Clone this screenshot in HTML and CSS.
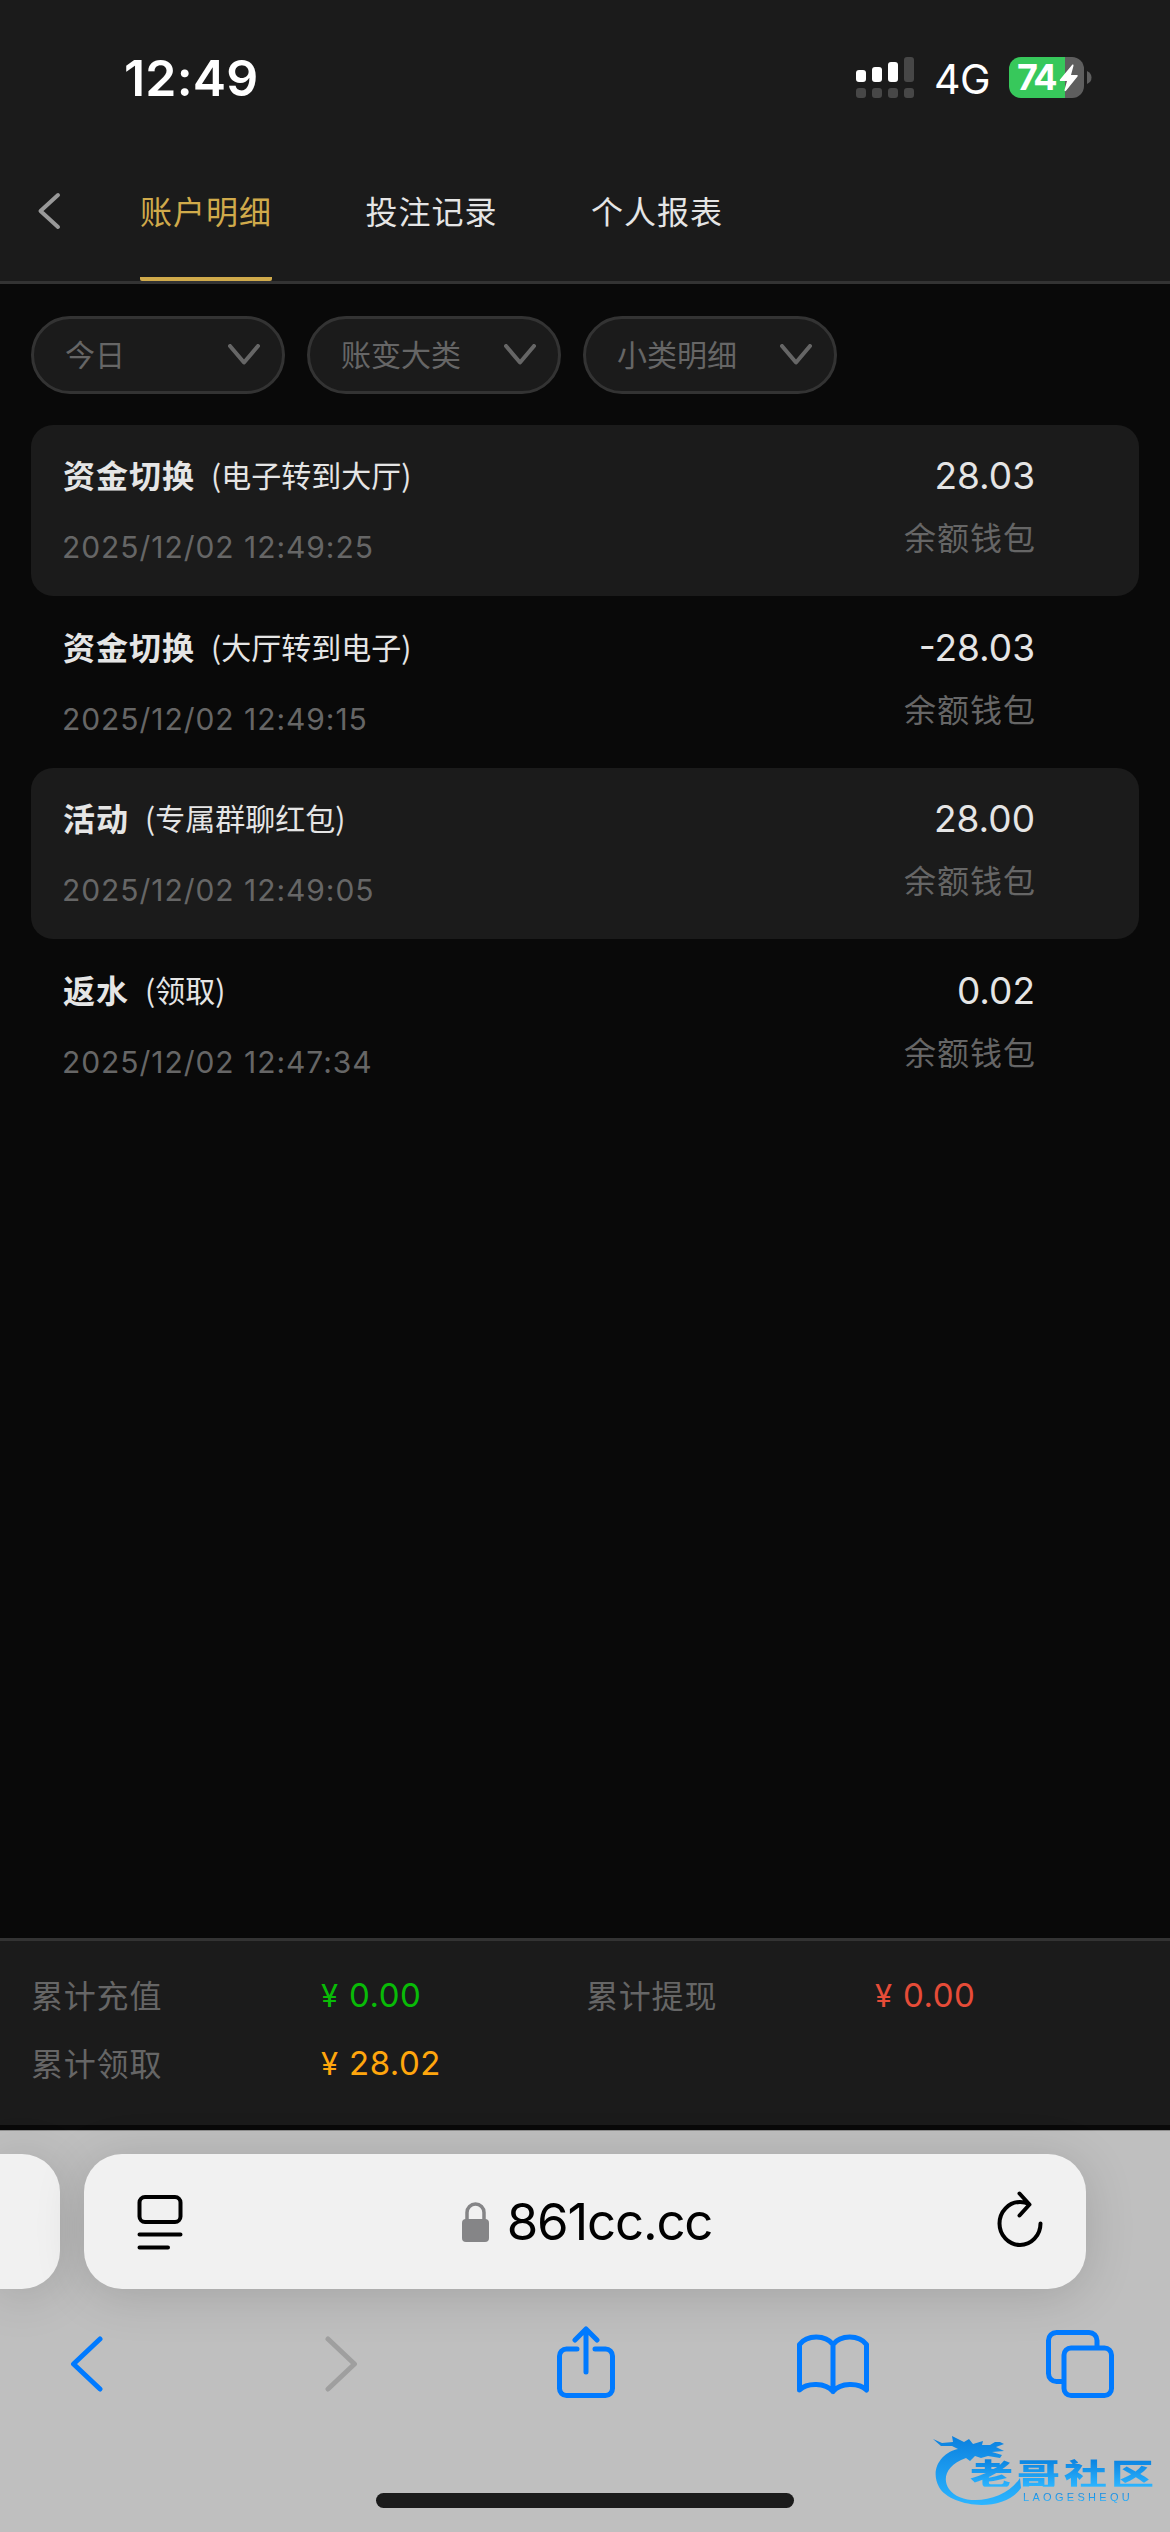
FILE: index.html
```html
<!DOCTYPE html>
<html lang="zh-CN">
<head>
<meta charset="utf-8">
<title>账户明细</title>
<link rel="stylesheet" href="styles.css">
</head>
<body>
<div class="screen">
  <header class="header">
    <div class="status">
      <span class="time">12:49</span>
      <div class="status-right">
        <svg class="signal" width="58" height="41" viewBox="0 0 58 41" fill="#fff">
          <rect x="0" y="13" width="10" height="12" rx="3"/><rect x="16" y="10" width="10" height="15" rx="3"/><rect x="32" y="5" width="10" height="20" rx="3"/>
          <g fill="#474747"><rect x="48" y="0" width="10" height="25" rx="3"/><rect x="0" y="31" width="10" height="10" rx="3"/><rect x="16" y="31" width="10" height="10" rx="3"/><rect x="32" y="31" width="10" height="10" rx="3"/><rect x="48" y="31" width="10" height="10" rx="3"/></g>
        </svg>
        <span class="network">4G</span>
        <div class="battery">
          <div class="cell"><span class="level">74</span>
            <svg class="bolt" width="20" height="28" viewBox="0 0 20 28"><path d="M13 1 1 15.5c-.5.8-.2 1.5.7 1.5H8L5.5 26c-.2 1.2.8 1.500 1.500.7L18.500 12.500c.5-.8.2-1.500-.7-1.500H12L14.500 1.800C14.700.6 13.700.2 13 1Z" fill="#fff"/></svg>
          </div>
          <svg class="nub" width="5" height="13" viewBox="0 0 5 13"><path d="M0 0q4.500 2 4.500 6.500T0 13Z" fill="#5e5e5e"/></svg>
        </div>
      </div>
    </div>
    <nav class="tabs">
      <svg class="back" width="26" height="40" viewBox="0 0 26 40" fill="none" stroke="#999" stroke-width="4" stroke-linecap="round" stroke-linejoin="round"><path d="M22 4 4.500 20 22 36"/></svg>
      <span class="tab active">账户明细</span>
      <span class="tab">投注记录</span>
      <span class="tab">个人报表</span>
    </nav>
  </header>

  <main class="content">
    <div class="filters">
      <div class="filter"><span>今日</span><svg width="32" height="22" viewBox="0 0 32 22"><path d="M2 2 16 18.500 30 2"/></svg></div>
      <div class="filter"><span>账变大类</span><svg width="32" height="22" viewBox="0 0 32 22"><path d="M2 2 16 18.500 30 2"/></svg></div>
      <div class="filter"><span>小类明细</span><svg width="32" height="22" viewBox="0 0 32 22"><path d="M2 2 16 18.500 30 2"/></svg></div>
    </div>
    <div class="list">
      <div class="record">
        <div class="info"><p class="title"><b>资金切换</b><span>(电子转到大厅)</span></p><p class="date">2025/12/02 12:49:25</p></div>
        <div class="amount"><p class="value">28.03</p><p class="wallet">余额钱包</p></div>
      </div>
      <div class="record">
        <div class="info"><p class="title"><b>资金切换</b><span>(大厅转到电子)</span></p><p class="date">2025/12/02 12:49:15</p></div>
        <div class="amount"><p class="value">-28.03</p><p class="wallet">余额钱包</p></div>
      </div>
      <div class="record">
        <div class="info"><p class="title"><b>活动</b><span>(专属群聊红包)</span></p><p class="date">2025/12/02 12:49:05</p></div>
        <div class="amount"><p class="value">28.00</p><p class="wallet">余额钱包</p></div>
      </div>
      <div class="record">
        <div class="info"><p class="title"><b>返水</b><span>(领取)</span></p><p class="date">2025/12/02 12:47:34</p></div>
        <div class="amount"><p class="value">0.02</p><p class="wallet">余额钱包</p></div>
      </div>
    </div>
  </main>

  <section class="totals">
    <span>累计充值</span><span class="sum green"><i>¥</i>0.00</span>
    <span>累计提现</span><span class="sum red"><i>¥</i>0.00</span>
    <span>累计领取</span><span class="sum orange"><i>¥</i>28.02</span>
  </section>

  <footer class="browser">
    <div class="address-row">
      <div class="previous-tab"></div>
      <div class="address">
        <svg class="reader" width="46" height="56" viewBox="0 0 46 56" fill="none" stroke="#000" stroke-width="4" stroke-linecap="round"><rect x="2.500" y="3" width="41" height="25" rx="5.500"/><path d="M2.500 40.500h41M2.500 53.500h28.500"/></svg>
        <div class="site">
          <svg class="lock" width="27" height="40" viewBox="0 0 27 40"><path d="M5 18v-7.500a8.500 8.500 0 0 1 17 0V18" fill="none" stroke="#858587" stroke-width="3.500"/><rect x="0" y="17" width="27" height="23" rx="4" fill="#858587"/></svg>
          <span class="url">861cc.cc</span>
        </div>
        <svg class="reload" width="46" height="58" viewBox="0 0 46 58" fill="none" stroke="#000" stroke-width="4" stroke-linecap="round" stroke-linejoin="round"><path d="M43.500 32.500a20.500 21.500 0 1 1-20.500-21.500q5 0 9 2M22.500 2.500 32.500 13.500 22.500 24.500"/></svg>
      </div>
    </div>
    <div class="toolbar">
      <svg width="33" height="56" viewBox="0 0 33 56"><path d="M30 3 3.500 28 30 53"/></svg>
      <svg class="disabled" width="33" height="56" viewBox="0 0 33 56"><path d="M3 3 29.500 28 3 53"/></svg>
      <svg class="share" width="58" height="72" viewBox="0 0 58 72"><path d="M20 23H9.500a7 7 0 0 0-7 7v32.500a7 7 0 0 0 7 7h39a7 7 0 0 0 7-7V30a7 7 0 0 0-7-7H38M29 46V3M18 14 29 3l11 11"/></svg>
      <svg width="72" height="62" viewBox="0 0 72 62"><path d="M36 11.500v47M36 11.500C28.500 1.500 10 1.500 2.500 11.500V57C10 49.500 28.500 49.500 36 58.500 43.500 49.500 62 49.500 69.500 57V11.500C62 1.500 43.500 1.500 36 11.500Z"/></svg>
      <svg width="68" height="68" viewBox="0 0 68 68"><path d="M16 51.500H10.500a8 8 0 0 1-8-8v-33a8 8 0 0 1 8-8H43a8 8 0 0 1 8 8V16"/><rect x="18" y="18" width="47.500" height="47.500" rx="7"/></svg>
    </div>
    <div class="home-indicator"></div>
    <div class="watermark">
      <svg width="100" height="76" viewBox="0 0 100 76">
        <defs><linearGradient id="blue" x1="0" y1="0" x2="0" y2="1"><stop offset="0" stop-color="#0a80df"/><stop offset="1" stop-color="#2cb5ff"/></linearGradient></defs>
        <path fill="url(#blue)" d="M3 5 12 9 23 8 22 2 34 8 39 5 43 10 53 7 52 11 60 11 65 8 70 8 74 10 66 13 74 17 62 18 72 21 70 24 58 22 51 24 45 22 40 27 36 24C16 31 12 45 19 55 31 73 74 69 90 44L91 54C73 80 20 73 9 53-1 34 13 18 28 15L22 12 11 12Z"/>
      </svg>
      <span class="mark">老哥社区</span>
      <span class="latin">LAOGESHEQU</span>
    </div>
  </footer>
</div>
</body>
</html>
```

FILE: styles.css
```css
* { box-sizing: border-box; }
body { margin: 0; background: #090909; }
p { margin: 0; }
svg { display: block; flex: none; }

.screen {
  width: 1170px;
  height: 2532px;
  display: flex;
  flex-direction: column;
  overflow: hidden;
  background: #090909;
  color: #e5e5e5;
  font-family: Inter, "Noto Sans CJK SC", sans-serif;
  white-space: nowrap;
}

.header { height: 284px; background: #1b1b1b; border-bottom: 3px solid #333; }
.status { height: 141px; padding: 14px 78px 0 124px; display: flex; justify-content: space-between; align-items: center; color: #fff; }
.time { font-size: 50px; font-weight: 600; letter-spacing: 0.2px; }
.status-right { display: flex; align-items: center; }
.network { width: 57px; margin: 3px 0 0 20px; font-size: 41px; font-weight: 400; letter-spacing: -0.500px; }
.battery { display: flex; align-items: center; gap: 3px; margin-left: 18px; }
.cell {
  width: 75px; height: 41px; padding-left: 8px;
  display: flex; align-items: center;
  border-radius: 12px;
  background: linear-gradient(90deg, #37c85b 56px, #5e5e5e 56px);
}
.level { width: 42px; font-size: 36px; font-weight: 700; letter-spacing: -2.500px; line-height: 41px; }

.tabs { height: 140px; display: flex; align-items: stretch; padding-left: 36px; }
.back { align-self: center; margin-right: 78px; }
.tab {
  width: 132px; margin-right: 93.500px; padding-top: 1px;
  display: flex; align-items: center;
  font-size: 32px; letter-spacing: 1px;
  border-bottom: 4px solid transparent;
  border-radius: 2px;
}
.tab.active { color: #d0aa4b; background: linear-gradient(#d0aa4b, #d0aa4b) bottom / 100% 4px no-repeat border-box; }

.content { flex: 1; padding: 32px 31px 0; }
.filters { display: flex; gap: 22px; }
.filter {
  width: 254px; height: 78px; padding: 0 22px 0 31px;
  display: flex; justify-content: space-between; align-items: center;
  border: 3px solid #333; border-radius: 39px;
  background: #1b1b1b; color: #666; font-size: 30px;
}
.filter span { padding-bottom: 4px; }
.filter svg { fill: none; stroke: #666; stroke-width: 4; stroke-linecap: round; stroke-linejoin: round; }

.list { margin-top: 31px; }
.record { height: 171.500px; padding: 0 104px 0 32px; display: flex; justify-content: space-between; border-radius: 22px; }
.record:nth-child(odd) { height: 171px; margin-bottom: 0.500px; background: #1b1b1b; }
.info { padding-top: 24px; }
.title { height: 50px; display: flex; align-items: center; gap: 16px; font-size: 30px; font-family: "Noto Sans CJK SC", sans-serif; }
.title b { font-size: 32px; letter-spacing: 1px; }
.date { margin: 23px 0 0 -1px; height: 50px; line-height: 50px; font-size: 30px; letter-spacing: 0.950px; color: #666; }
.amount { padding-top: 26px; text-align: right; }
.value { height: 50px; line-height: 50px; font-size: 37px; }
.wallet { margin: 13px -1px 0 0; height: 50px; line-height: 50px; font-size: 32px; letter-spacing: 1px; color: #666; }

.totals {
  height: 187px; padding: 19px 31px 0;
  display: grid; grid-template-columns: 290px 265px 289px 1fr; grid-auto-rows: 68px; align-items: center; align-content: start;
  background: #1b1b1b; border-top: 3px solid #333;
  color: #666; font-size: 32px; letter-spacing: 0.800px;
}
.sum { font-size: 33px; letter-spacing: 0.500px; padding-top: 1px; }
.sum i { display: inline-block; width: 28px; font-size: 31px; font-style: normal; line-height: 1; }
.green { color: #09bb07; }
.red { color: #e64c38; }
.orange { color: #ffa60d; }

.browser { position: relative; height: 402px; margin-top: 5px; background: #bfbfbf; border-top: 1px solid #8f8f8f; color: #000; }
.address-row { display: flex; gap: 24px; padding-top: 23px; }
.previous-tab, .address { height: 135px; background: #f1f1f1; box-shadow: 0 6px 50px rgba(0, 0, 0, 0.15); }
.previous-tab { width: 60px; border-radius: 0 38px 38px 0; }
.address { width: 1002px; padding: 0 43px 0 53px; display: flex; align-items: center; justify-content: space-between; border-radius: 38px; }
.site { display: flex; align-items: center; gap: 18px; margin-right: 6px; }
.url { font-size: 51px; letter-spacing: -1.200px; }
.reload { margin-bottom: 3px; }
.toolbar {
  position: relative;
  height: 140px; margin-top: 5px; padding-left: 70px;
  display: grid; grid-template-columns: 255px 232px 240px 249px auto; align-items: center; justify-content: start;
}
.toolbar svg { fill: none; stroke: #007aff; stroke-width: 5; stroke-linecap: round; stroke-linejoin: round; }
.toolbar .disabled { stroke: #9f9f9f; }
.toolbar .share { margin-bottom: 4px; }
.home-indicator { width: 418px; height: 15px; margin: 59px auto 0; border-radius: 8px; background: #1b1b1b; }

.watermark { position: absolute; left: 930px; top: 303px; width: 230px; height: 80px; }
.mark, .latin {
  position: absolute;
  background: linear-gradient(#087fde, #2cb5ff);
  background-clip: text; -webkit-background-clip: text; color: transparent;
}
.mark { left: 40px; top: 17px; font: 900 43px/42px "Noto Sans CJK SC", sans-serif; letter-spacing: 4px; transform: scaleY(0.7); }
.latin { left: 93px; top: 57px; font: 500 11px/12px "Liberation Sans", sans-serif; letter-spacing: 3.300px; }
```
